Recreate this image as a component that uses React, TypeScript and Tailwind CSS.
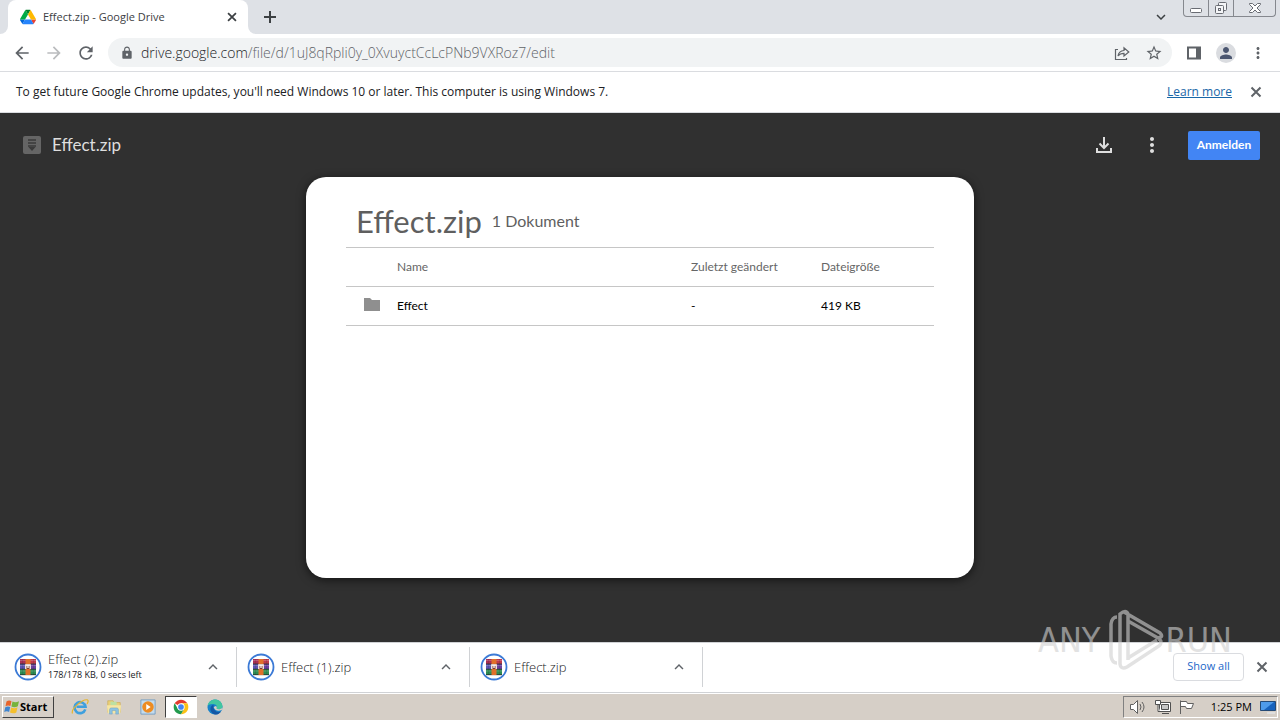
import type { ReactNode } from 'react';
import { MdArrowBack, MdArrowForward, MdExpandLess, MdExpandMore, MdLock, MdMoreVert, MdPerson, MdRefresh, MdStarBorder } from 'react-icons/md';

type Download = { name: string; detail?: string };

const downloads: Download[] = [
  { name: 'Effect (2).zip', detail: '178/178 KB, 0 secs left' },
  { name: 'Effect (1).zip' },
  { name: 'Effect.zip' },
];

const files = [{ name: 'Effect', modified: '-', size: '419 KB' }];

function IconButton({ label, className = '', children }: { label: string; className?: string; children: ReactNode }) {
  return (
    <button type="button" aria-label={label} className={`flex shrink-0 items-center justify-center ${className}`}>
      {children}
    </button>
  );
}

function CloseIcon({ className = '' }: { className?: string }) {
  return (
    <svg viewBox="0 0 16 16" className={className} fill="none" stroke="currentColor" strokeWidth="2">
      <path d="m3.500 3.500 9 9M12.500 3.500l-9 9" />
    </svg>
  );
}

function DriveLogo() {
  return (
    <svg viewBox="0 0 87.3 78" className="h-4 w-4 shrink-0">
      <path d="m6.6 66.85 3.85 6.65c.8 1.4 1.95 2.5 3.3 3.3l13.75-23.8h-27.5c0 1.55.4 3.1 1.2 4.5z" fill="#0066da" />
      <path d="m43.65 25-13.75-23.8c-1.35.8-2.5 1.9-3.3 3.3l-25.4 44a9.06 9.06 0 0 0 -1.2 4.5h27.5z" fill="#00ac47" />
      <path d="m73.55 76.8c1.35-.8 2.5-1.9 3.3-3.3l1.6-2.75 7.65-13.25c.8-1.4 1.2-2.95 1.2-4.5h-27.5l5.85 11.5z" fill="#ea4335" />
      <path d="m43.65 25 13.75-23.8c-1.35-.8-2.9-1.2-4.5-1.2h-18.5c-1.6 0-3.15.45-4.5 1.2z" fill="#00832d" />
      <path d="m59.8 53h-32.3l-13.75 23.8c1.35.8 2.9 1.2 4.5 1.2h50.8c1.6 0 3.15-.45 4.5-1.2z" fill="#2684fc" />
      <path d="m73.4 26.5-12.7-22c-.8-1.4-1.95-2.5-3.3-3.3l-13.75 23.8 16.15 28h27.45c0-1.55-.4-3.1-1.2-4.5z" fill="#ffba00" />
    </svg>
  );
}

function RarIcon() {
  return (
    <svg viewBox="0 0 28 28" className="h-7 w-7 shrink-0">
      <circle cx="14" cy="14" r="12.500" fill="#fff" stroke="#3b7ad6" strokeWidth="1.800" />
      <path d="M6 6h6v5H6z" fill="#a92f55" />
      <path d="M16 6h6v5h-6z" fill="#c03a4c" />
      <path d="M6 11h5v5H6z" fill="#5b55b5" />
      <path d="M17 11h5v5h-5z" fill="#6a3fa0" />
      <path d="M6 16h16v6H6z" fill="#2c8c52" />
      <path d="M6 7.500h16M6 12.500h16M6 18h16" stroke="#fff" strokeOpacity=".3" strokeWidth=".7" />
      <path d="M6 11h16M6 16.200h16M6 21.700h16" stroke="#263030" strokeWidth=".8" />
      <path d="M11.500 6h5v16h-5z" fill="#e0702a" />
      <path d="M8.500 6v16M19.500 6v16" stroke="#2b2b38" strokeOpacity=".3" strokeWidth=".6" />
      <path d="M11 11h6v5h-6z" fill="#7a3a2c" />
      <path d="M11.800 16v-4h4.400v4M14 15v-3" fill="none" stroke="#fff" strokeWidth="1.300" />
    </svg>
  );
}

function ChromeLogo() {
  return (
    <svg viewBox="0 0 48 48" className="h-4 w-4">
      <path d="M24 24 4.950 13A22 22 0 0 1 43.050 13H24z" fill="#e33b2e" />
      <path d="M43.050 13A22 22 0 0 1 24 46L33.500 29.500 24 13z" fill="#fbc116" />
      <path d="M4.950 13A22 22 0 0 0 24 46L33.500 29.500H14.500z" fill="#229a4d" />
      <circle cx="24" cy="24" r="11" fill="#fff" />
      <circle cx="24" cy="24" r="8.500" fill="#4285f4" />
    </svg>
  );
}

function WindowsFlag() {
  return (
    <svg viewBox="0 0 16 16" className="h-4 w-4 shrink-0">
      <path d="M2.500 2.500Q5 .8 7.500 2.200L6.400 7Q4 5.800 1.500 7.200z" fill="#e8642b" />
      <path d="M8.500 2.600Q11.500 4.200 15 2.300L13.800 7.300Q10.500 9 7.400 7.400z" fill="#77b33b" />
      <path d="M1.300 8.200Q3.800 6.800 6.200 8L5.100 13Q2.800 11.600.2 13z" fill="#3f85cf" />
      <path d="M7.200 8.400Q10.300 10 13.500 8.300L12.300 13.400Q9.300 15.200 6 13.500z" fill="#f5bf2c" />
    </svg>
  );
}

function ExplorerIcon() {
  return (
    <svg viewBox="0 0 18 18" className="h-[18px] w-[18px]">
      <path d="M14.300 11.300A5.500 5.500 0 1 1 14.500 8.800H5.500" fill="none" stroke="#3fa0de" strokeWidth="2.600" />
      <path d="M1.500 15.500C-.5 11 11.500 1 16.300 1.800c1.500.6.6 2.700-.3 4" fill="none" stroke="#e7b62d" strokeWidth="1.200" />
    </svg>
  );
}

function FolderStackIcon() {
  return (
    <svg viewBox="0 0 18 18" className="h-4 w-4">
      <path d="M2 2h6l1 2h7v11H2z" fill="#ead07a" stroke="#c9a850" strokeWidth=".7" />
      <path d="M5 3h7v4H5z" fill="#bde0a2" />
      <path d="M1 7h16l-1 9H2z" fill="#f6e6a4" />
      <path d="M4 17v-5q0-2 2-2h6q2 0 2 2v5h-3v-4H7v4z" fill="#8cc2e2" stroke="#6099bd" strokeWidth=".5" />
    </svg>
  );
}

function MediaIcon() {
  return (
    <svg viewBox="0 0 18 18" className="h-4 w-4">
      <path d="M1 1h16v16H1z" fill="#c3dbed" stroke="#739cbf" />
      <circle cx="9" cy="9" r="6.500" fill="#ed8c22" />
      <path d="m7 5.500 5 3.500-5 3.500z" fill="#fff" />
    </svg>
  );
}

function EdgeIcon() {
  return (
    <svg viewBox="0 0 18 18" className="h-4 w-4">
      <circle cx="9" cy="9" r="8.500" fill="#1782ca" />
      <path d="M.6 8C2-1.500 16-2 17.400 8c.5 3.500-5 5-6.800 2.800 1.600-2 .2-4.800-2.600-5C4 5.400 1.500 6.500.6 8z" fill="#42c6a0" />
      <path d="M7.300 6.500C2 8 3 16 9 17.500c3 .2 5.300-1 6.800-3.500-4.800 1.800-8-1.500-8.500-4z" fill="#1457a5" />
      <path d="M7.500 9c.8 3.600 4.500 5 9 3.500.8-1 .9-2 1-3-1.600 2.300-5.500 2.300-6.900 1.300.8-.7.500-2.300-.6-3z" fill="#d6cfc7" />
    </svg>
  );
}

function WindowControls() {
  return (
    <div className="flex h-[17px] self-start rounded-b border border-t-0 border-[#85888e] text-[#696c73]">
      <IconButton label="Minimize" className="w-[25px] border-r border-[#85888e]">
        <svg viewBox="0 0 16 16" className="h-4 w-4" fill="#fff" stroke="currentColor"><rect x="2.500" y="8.500" width="11" height="4" rx="1" /></svg>
      </IconButton>
      <IconButton label="Restore" className="w-[25px] border-r border-[#85888e]">
        <svg viewBox="0 0 16 16" className="h-4 w-4" fill="#f4f5f7" stroke="currentColor">
          <rect x="5.500" y="2.500" width="8" height="8" rx="1" /><rect x="2.500" y="5.500" width="8" height="8" rx="1" /><rect x="5.500" y="8.500" width="2" height="2" />
        </svg>
      </IconButton>
      <IconButton label="Close" className="w-[41px]">
        <svg viewBox="0 0 16 16" className="h-4 w-4" fill="#fff" stroke="currentColor"><path d="M2.500 3.500h3L8 6l2.500-2.500h3v1L10 8l3.500 3.500v1h-3L8 10l-2.500 2.500h-3v-1L6 8 2.500 4.500z" /></svg>
      </IconButton>
    </div>
  );
}

function TabStrip() {
  return (
    <div className="flex h-[34px] items-stretch bg-[#dee1e6] pl-2 pr-1 text-[#3c4043]">
      <div className="relative flex w-60 items-center rounded-t-lg bg-white pl-3 pr-2">
        <span className="absolute bottom-0 -left-2 h-2 w-2 bg-white"><span className="block h-2 w-2 rounded-br-lg bg-[#dee1e6]" /></span>
        <span className="absolute bottom-0 -right-2 h-2 w-2 bg-white"><span className="block h-2 w-2 rounded-bl-lg bg-[#dee1e6]" /></span>
        <DriveLogo />
        <span className="ml-[7px] flex-1 whitespace-nowrap text-[11px]">Effect.zip - Google Drive</span>
        <IconButton label="Close tab" className="h-4 w-4"><CloseIcon className="h-[14px] w-[14px]" /></IconButton>
      </div>
      <IconButton label="New tab" className="ml-3 w-5">
        <svg viewBox="0 0 16 16" className="h-4 w-4" stroke="currentColor" strokeWidth="2"><path d="M8 2v12M2 8h12" /></svg>
      </IconButton>
      <div className="flex-1" />
      <IconButton label="Search tabs" className="mr-3 w-5"><MdExpandMore className="h-[18px] w-[18px]" /></IconButton>
      <WindowControls />
    </div>
  );
}

function Toolbar() {
  return (
    <div className="flex h-[38px] items-center border-b border-[#dadce0] bg-white px-3 text-[#5f6368]">
      <IconButton label="Back" className="h-5 w-5"><MdArrowBack className="h-5 w-5" /></IconButton>
      <IconButton label="Forward" className="ml-3 h-5 w-5 text-[#babcbe]"><MdArrowForward className="h-5 w-5" /></IconButton>
      <IconButton label="Reload" className="ml-3 h-5 w-5"><MdRefresh className="h-5 w-5" /></IconButton>
      <div className="ml-3 flex h-[29px] flex-1 items-center rounded-full bg-[#f1f3f4] pl-3 pr-2">
        <MdLock className="h-[14px] w-[14px] shrink-0" />
        <p className="ml-[7px] flex-1 whitespace-nowrap text-[14px] font-light"><span className="text-[#202124]">drive.google.com</span>/file/d/1uJ8qRpli0y_0XvuyctCcLcPNb9VXRoz7/edit</p>
        <IconButton label="Share this page" className="h-5 w-5">
          <svg viewBox="0 0 16 16" className="h-4 w-4" fill="none" stroke="currentColor" strokeWidth="1.200">
            <path d="M4 4.500H1.500v10h11V13" /><path d="M4 11c.5-3.500 2.500-5.300 6-5.500V2.800L14.800 7 10 11V8.300C7.500 8.300 5.500 9 4 11z" />
          </svg>
        </IconButton>
        <IconButton label="Bookmark" className="ml-3 h-5 w-5"><MdStarBorder className="h-[18px] w-[18px]" /></IconButton>
      </div>
      <IconButton label="Side panel" className="ml-3 h-5 w-5">
        <svg viewBox="0 0 16 16" className="h-4 w-4"><path d="M1 1.500h14v13H1zM3 3.500v9h7v-9z" fill="currentColor" fillRule="evenodd" /></svg>
      </IconButton>
      <IconButton label="Profile" className="ml-3 h-5 w-5 rounded-full bg-[#dadce0] text-[#4b5670]"><MdPerson className="h-[18px] w-[18px]" /></IconButton>
      <IconButton label="Menu" className="ml-3 h-5 w-5"><MdMoreVert className="h-[18px] w-[18px]" /></IconButton>
    </div>
  );
}

function UpdateBar() {
  return (
    <div className="flex h-[41px] items-center border-b border-[#dadce0] bg-white px-4 text-[12px] text-[#202124]">
      <p className="flex-1">To get future Google Chrome updates, you'll need Windows 10 or later. This computer is using Windows 7.</p>
      <a href="#" className="text-[#1967a8] underline">Learn more</a>
      <IconButton label="Dismiss" className="ml-4 h-4 w-4 text-[#5f6368]"><CloseIcon className="h-4 w-4" /></IconButton>
    </div>
  );
}

function Viewer() {
  return (
    <main className="flex flex-1 flex-col bg-[#303030] pb-16 font-['Lato',sans-serif]">
      <header className="flex h-16 items-center pl-[23px] pr-5 text-[#dedede]">
        <svg viewBox="0 0 18 18" className="h-[18px] w-[18px]">
          <rect width="18" height="18" rx="2" fill="#656565" />
          <path d="M5 4h8M5 7h8M5 10h8" stroke="#3a3a3a" strokeWidth="1.600" />
          <path d="M5.500 11h7L9 15z" fill="#3a3a3a" />
        </svg>
        <h1 className="ml-[11px] flex-1 text-[17px] leading-6">Effect.zip</h1>
        <IconButton label="Download" className="h-6 w-6">
          <svg viewBox="0 0 24 24" className="h-6 w-6" fill="none" stroke="currentColor" strokeWidth="2"><path d="M12 4v11M7.500 10.500 12 15l4.500-4.500M5 15v4h14v-4" /></svg>
        </IconButton>
        <IconButton label="More" className="ml-6 h-6 w-6"><MdMoreVert className="h-6 w-6" /></IconButton>
        <button type="button" className="ml-6 h-[29px] w-[72px] rounded-xs bg-[#4285f4] text-[12px] font-bold text-white">Anmelden</button>
      </header>
      <section className="mx-auto w-full max-w-[668px] flex-1 rounded-[20px] bg-white px-10 pt-5 shadow-[0_2px_10px_rgba(0,0,0,0.6)]">
        <div className="flex h-[50px] items-center gap-[10px] pb-[2px] pl-[10px] text-[#5f5f5f]">
          <h2 className="text-[31px]">Effect.zip</h2>
          <span className="text-[16px]">1 Dokument</span>
        </div>
        <table className="w-full table-fixed border-t border-[#c6c6c6] text-left text-[12px]">
          <colgroup><col className="w-[51px]" /><col /><col className="w-[130px]" /><col className="w-[113px]" /></colgroup>
          <thead>
            <tr className="h-[39px] border-b border-[#c6c6c6] text-[#666]">
              <td />
              <th className="font-normal">Name</th>
              <th className="font-normal">Zuletzt geändert</th>
              <th className="font-normal">Dateigröße</th>
            </tr>
          </thead>
          <tbody>
            {files.map((f) => (
              <tr key={f.name} className="h-[39px] border-b border-[#c6c6c6] text-black">
                <td className="pb-1 pl-[18px]">
                  <svg viewBox="0 0 16 13" className="h-[13px] w-4 fill-[#8f8f8f]"><path d="M0 0h6l2 2h8v11H0z" /></svg>
                </td>
                <td>{f.name}</td>
                <td>{f.modified}</td>
                <td>{f.size}</td>
              </tr>
            ))}
          </tbody>
        </table>
      </section>
    </main>
  );
}

function DownloadItem({ name, detail }: Download) {
  return (
    <div className="flex h-10 w-[233px] items-center border-r border-[#d0d2d5] pr-[14px] pl-[10px]">
      <RarIcon />
      <div className="ml-[6px] flex-1 whitespace-nowrap text-[#202124]">
        <p className="text-[13px] leading-4 font-light">{name}</p>
        {detail && <p className="text-[9px] leading-4">{detail}</p>}
      </div>
      <IconButton label={`Options for ${name}`} className="h-[18px] w-[18px] text-[#5f6368]"><MdExpandLess className="h-[18px] w-[18px]" /></IconButton>
    </div>
  );
}

function DownloadShelf() {
  return (
    <div className="flex h-[51px] items-center border-y border-[#d0d2d5] bg-white pr-[10px] pb-[2px]">
      <div className="flex flex-1 pl-1">
        {downloads.map((d) => <DownloadItem key={d.name} {...d} />)}
      </div>
      <button type="button" className="h-7 w-[71px] rounded border border-[#dadce0] text-[11px] text-[#1a67c9]">Show all</button>
      <IconButton label="Close downloads" className="ml-[10px] h-4 w-4 text-[#5f6368]"><CloseIcon className="h-4 w-4" /></IconButton>
    </div>
  );
}

function Taskbar() {
  return (
    <footer className="flex h-[27px] items-center border-t border-white bg-[#d6cfc7] text-black">
      <button type="button" className="ml-[2px] flex h-[22px] w-[52px] items-center border border-t-white border-r-[#404040] border-b-[#404040] border-l-white pl-px text-[11px] font-bold">
        <WindowsFlag />
        Start
      </button>
      <div className="ml-[9px] flex items-center">
        <IconButton label="Internet Explorer" className="h-[22px] w-[34px]"><ExplorerIcon /></IconButton>
        <IconButton label="Libraries" className="h-[22px] w-[34px]"><FolderStackIcon /></IconButton>
        <IconButton label="Media Player" className="h-[22px] w-[34px]"><MediaIcon /></IconButton>
        <IconButton label="Chrome" className="h-[22px] w-8 border border-t-[#404040] border-r-white border-b-white border-l-[#404040] bg-white"><ChromeLogo /></IconButton>
        <IconButton label="Edge" className="h-[22px] w-9"><EdgeIcon /></IconButton>
      </div>
      <div className="flex-1" />
      <div className="mr-[2px] flex h-[22px] items-center gap-2 border border-t-[#808080] border-r-white border-b-white border-l-[#808080] pl-[5px] pr-px text-[11px]">
        <svg viewBox="0 0 18 16" className="h-4 w-[18px]" fill="#fff" stroke="#606060">
          <path d="M1.500 5.500h3l4-4v13l-4-4h-3z" /><path d="M11 5q2 3 0 6M13 3q4 5 0 10" fill="none" />
        </svg>
        <svg viewBox="0 0 16 16" className="h-4 w-4" stroke="#505050" fill="#fff">
          <path d="M4.500 3.500h11v9h-11zM7 14.500h7" /><path d="M6.500 5.500h7v5h-7z" fill="#c7c7c7" /><path d="M.5 1.500h5v4h-5zM3 5.500v7h2" />
        </svg>
        <svg viewBox="0 0 16 16" className="h-4 w-4" fill="#fff" stroke="#606060"><path d="M1.500 15V1.500M1.500 2.500h6l1 2h6l-2 5h-5l-1-2h-5" /></svg>
        <time className="ml-2">1:25 PM</time>
        <svg viewBox="0 0 16 16" className="h-4 w-4"><path d="M.5 2.500h15v9H.5z" fill="#1762bc" stroke="#244a76" /><path d="M1 3h13L4 11H1z" fill="#4e9bea" /><path d="M7 14h8" stroke="#dedede" strokeWidth="2" /></svg>
      </div>
    </footer>
  );
}

function Watermark() {
  return (
    <div className="pointer-events-none absolute right-12 bottom-12 flex h-[64px] w-[194px] items-center justify-between text-[34px] leading-10 text-[#d0d0d0] opacity-60 font-['DejaVu_Sans_Condensed','Roboto',sans-serif]">
      <span>ANY</span>
      <svg viewBox="72 0 56 64" className="absolute left-[70px] h-[64px] w-14" fill="none" stroke="currentColor" strokeWidth="3.500">
        <path d="M81 9q-5 0-6 7v32q1 7 6 7M92 52V6q-2-5-8 0v50q1 6 7 3l32-21q4-4 0-7M88 4l36 21q4 4-2 5L92 13M121 32 92 50" />
      </svg>
      <span>RUN</span>
    </div>
  );
}

export default function App() {
  return (
    <div className="relative flex min-h-screen flex-col font-['Open_Sans',sans-serif]">
      <TabStrip />
      <Toolbar />
      <UpdateBar />
      <Viewer />
      <DownloadShelf />
      <Taskbar />
      <Watermark />
    </div>
  );
}
